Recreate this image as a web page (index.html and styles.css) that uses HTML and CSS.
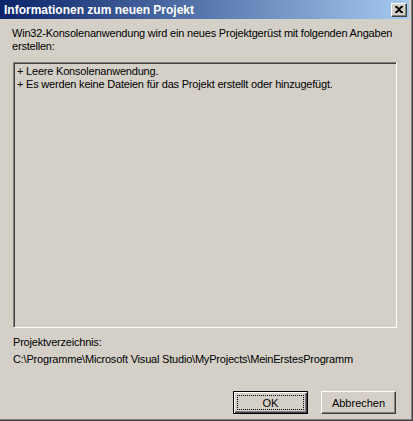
FILE: index.html
```html
<!DOCTYPE html>
<html lang="de">
<head>
<meta charset="utf-8">
<title>Informationen zum neuen Projekt</title>
<link rel="stylesheet" href="styles.css">
</head>
<body>
<div class="window">
  <div class="titlebar">
    <span class="title">Informationen zum neuen Projekt</span>
    <span class="close" aria-label="Schließen">
      <svg width="8" height="7" viewBox="0 0 8 7"><path d="M0 0h2l2 2 2-2h2v1L5 3.5 8 6v1H6L4 5 2 7H0V6l3-2.5L0 1z" fill="#000"/></svg>
    </span>
  </div>
  <div class="content">
    <p class="intro">Win32-Konsolenanwendung wird ein neues Projektgerüst mit folgenden Angaben erstellen:</p>
    <div class="infobox">
      <div>+ Leere Konsolenanwendung.</div>
      <div>+ Es werden keine Dateien für das Projekt erstellt oder hinzugefügt.</div>
    </div>
    <p class="label">Projektverzeichnis:</p>
    <p class="path">C:\Programme\Microsoft Visual Studio\MyProjects\MeinErstesProgramm</p>
    <div class="buttons">
      <span class="btn default"><span class="focus">OK</span></span>
      <span class="btn">Abbrechen</span>
    </div>
  </div>
</div>
</body>
</html>
```

FILE: styles.css
```css
html, body {
  margin: 0;
  padding: 0;
  background: #d4d0c8;
}
body {
  font-family: "Liberation Sans", Arial, sans-serif;
  font-size: 11px;
  color: #000;
}
.window {
  width: 413px;
  height: 421px;
  box-sizing: border-box;
  border-right: 1px solid #404040;
  border-bottom: 1px solid #404040;
  box-shadow: inset -1px -1px 0 #808080;
  display: flex;
  flex-direction: column;
}
.titlebar {
  height: 19px;
  margin-right: 3px;
  background: linear-gradient(to right, #0a246a, #a6caf0);
  display: flex;
  align-items: center;
  justify-content: space-between;
  padding: 0 2px 0 4px;
}
.title {
  color: #fff;
  font-weight: bold;
  font-size: 12px;
  white-space: nowrap;
}
.close {
  width: 16px;
  height: 14px;
  box-sizing: border-box;
  background: #d4d0c8;
  border-top: 1px solid #fff;
  border-left: 1px solid #fff;
  border-right: 1px solid #404040;
  border-bottom: 1px solid #404040;
  box-shadow: inset -1px -1px 0 #808080;
  display: flex;
  align-items: center;
  justify-content: center;
  padding: 0 1px 1px 0;
}
.content {
  flex: 1;
  display: flex;
  flex-direction: column;
  padding: 8px 0 0 12px;
  letter-spacing: -0.2px;
}
.intro {
  margin: 0;
  width: 392px;
  line-height: 13px;
}
.infobox {
  margin: 9px 0 0 1px;
  width: 384px;
  height: 266px;
  box-sizing: border-box;
  border-top: 1px solid #808080;
  border-left: 1px solid #808080;
  border-right: 1px solid #fff;
  border-bottom: 1px solid #fff;
  box-shadow: inset 1px 1px 0 #404040, inset -1px -1px 0 #d4d0c8;
  padding: 2px 3px;
  line-height: 13px;
}
.label {
  margin: 8px 0 0 1px;
  line-height: 13px;
}
.path {
  margin: 4px 0 0 1px;
  line-height: 13px;
}
.buttons {
  margin-top: auto;
  margin-bottom: 6px;
  display: flex;
  justify-content: flex-end;
  gap: 13px;
  padding-right: 16px;
  letter-spacing: 0;
}
.btn {
  width: 75px;
  height: 23px;
  box-sizing: border-box;
  border-top: 1px solid #fff;
  border-left: 1px solid #fff;
  border-right: 1px solid #404040;
  border-bottom: 1px solid #404040;
  box-shadow: inset -1px -1px 0 #808080;
  display: flex;
  align-items: center;
  justify-content: center;
}
.btn.default {
  border: 1px solid #000;
  box-shadow: inset 1px 1px 0 #fff, inset -1px -1px 0 #404040, inset -2px -2px 0 #808080;
  padding: 3px;
}
.focus {
  flex: 1;
  align-self: stretch;
  display: flex;
  align-items: center;
  justify-content: center;
  border: 1px dotted #000;
}
```
